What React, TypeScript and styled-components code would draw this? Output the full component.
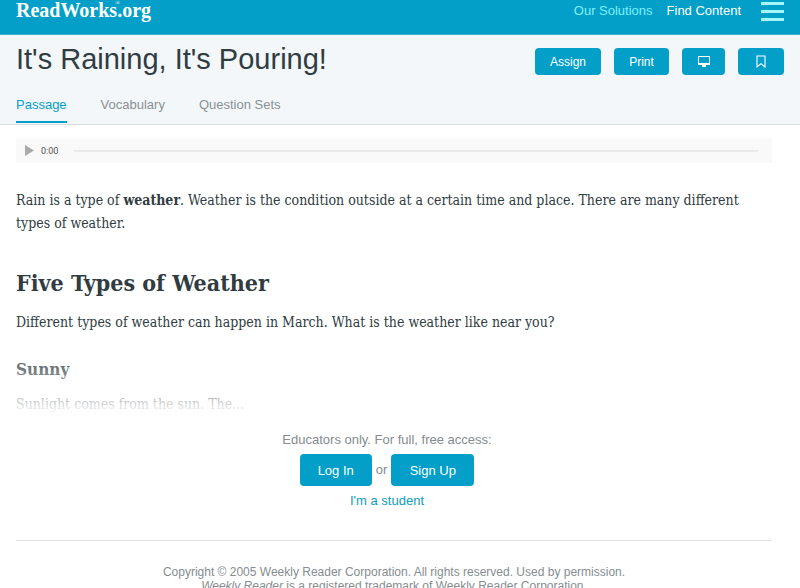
import React from "react";
import styled, { createGlobalStyle } from "styled-components";

const sans = '"Liberation Sans", Arial, sans-serif';
const serif = '"DejaVu Serif Condensed", "DejaVu Serif", serif';
const brand = "#039fc8";

const GlobalStyle = createGlobalStyle`
  *, *::before, *::after { box-sizing: border-box; }
  html { scrollbar-width: none; }
  body { margin: 0; background: #fff; color: #303c42; font-family: ${sans}; }
  h1, h2, h3, p { margin: 0; }
  a { text-decoration: none; }
`;

const TopBar = styled.header`
  display: flex;
  align-items: flex-start;
  justify-content: space-between;
  height: 35px;
  padding: 0 16px;
  background: ${brand};
  border-bottom: 1px solid #3fb0cf;
`;

const Logo = styled.a`
  position: relative;
  color: #fff;
  font-family: "Liberation Serif", serif;
  font-size: 20px;
  line-height: 20px;
  font-weight: 700;
  white-space: nowrap;
`;

const Registered = styled.sup`
  position: absolute;
  top: 0;
  margin-left: -2px;
  font-size: 6px;
  line-height: 6px;
  font-weight: 400;
`;

const TopNav = styled.nav`
  display: flex;
  align-items: center;
  height: 22px;
`;

const NavLink = styled.a<{ $pale?: boolean }>`
  margin-right: 14px;
  font-size: 13px;
  line-height: 22px;
  color: ${(p) => (p.$pale ? "#7ff0fb" : "#fff")};
`;

const MenuButton = styled.button`
  display: flex;
  flex-direction: column;
  justify-content: space-between;
  width: 23px;
  height: 19px;
  margin-left: 6px;
  padding: 0;
  border: 0;
  background: none;
`;

const MenuBar = styled.span`
  height: 3px;
  background: #a4f6fb;
`;

const Heading = styled.section`
  padding: 8px 16px 0;
  background: #f3f7f9;
  border-bottom: 1px solid #d5dddf;
`;

const TitleRow = styled.div`
  display: flex;
  align-items: flex-start;
  justify-content: space-between;
`;

const Title = styled.h1`
  font-size: 29px;
  line-height: 33px;
  font-weight: 400;
`;

const Actions = styled.div`
  display: flex;
  gap: 13px;
  padding-top: 5px;
`;

const ActionButton = styled.button<{ $width: number }>`
  display: flex;
  align-items: center;
  justify-content: center;
  width: ${(p) => p.$width}px;
  height: 27px;
  padding: 0;
  border: 0;
  border-radius: 4px;
  background: ${brand};
  color: #fff;
  font-family: ${sans};
  font-size: 12px;
`;

const Tabs = styled.nav`
  display: flex;
  gap: 34px;
  padding: 17px 0 1px;
`;

const Tab = styled.a<{ $active?: boolean }>`
  padding: 4px 0 9px;
  border-bottom: 2px solid ${(p) => (p.$active ? brand : "transparent")};
  color: ${(p) => (p.$active ? brand : "#899195")};
  font-size: 13px;
  line-height: 15px;
`;

const Main = styled.main`
  padding: 13px 28px 0 16px;
`;

const Player = styled.div`
  display: flex;
  align-items: center;
  height: 25px;
  padding: 0 14px 0 9px;
  background: #f9f9f9;
`;

const PlayButton = styled.button`
  display: flex;
  padding: 0;
  border: 0;
  background: none;
`;

const Time = styled.span`
  width: 33px;
  margin-left: 7px;
  color: #555;
  font-family: Roboto, sans-serif;
  font-size: 9px;
`;

const Seek = styled.input`
  flex: 1;
  min-width: 0;
  height: 12px;
  margin: 0;
  appearance: none;
  background: transparent;

  &::-webkit-slider-runnable-track { height: 2px; background: #e9e9e9; }
  &::-webkit-slider-thumb { appearance: none; width: 1px; height: 2px; background: #e9e9e9; }
`;

const Passage = styled.article`
  position: relative;
  padding-top: 26px;
  font-family: ${serif};

  &::after {
    content: "";
    position: absolute;
    inset: auto 0 0;
    height: 72px;
    background: linear-gradient(rgba(255, 255, 255, 0), rgba(255, 255, 255, 0.7) 78%, #fff 98%);
    pointer-events: none;
  }
`;

const Paragraph = styled.p`
  font-size: 14px;
  line-height: 23px;
`;

const SectionTitle = styled.h2`
  padding: 31px 0 12px;
  font-size: 23px;
  line-height: 33px;
  font-weight: 700;
`;

const SubTitle = styled.h3`
  padding: 24px 0 12px;
  font-size: 17px;
  line-height: 23px;
  font-weight: 700;
`;

const Access = styled.section`
  display: flex;
  flex-direction: column;
  align-items: center;
  padding: 16px 14px 31px 0;
  color: #858c8f;
  font-size: 13px;
  line-height: 16px;
`;

const AccessRow = styled.div`
  display: flex;
  align-items: center;
  gap: 4px;
  margin: 6px 0 7px;
`;

const AccessButton = styled.button<{ $width: number }>`
  width: ${(p) => p.$width}px;
  height: 32px;
  padding: 0;
  border: 0;
  border-radius: 4px;
  background: ${brand};
  color: #fff;
  font-family: ${sans};
  font-size: 13px;
`;

const StudentLink = styled.a`
  color: #0e9dbd;
`;

const Footer = styled.footer`
  padding: 24px 0 16px;
  border-top: 1px solid #dfe3e4;
  color: #858d91;
  font-size: 12px;
  line-height: 14px;
  text-align: center;
`;

const MonitorIcon = () => (
  <svg width="14" height="13" viewBox="0 0 14 13" aria-hidden="true">
    <path d="M1.5 1.5h11v8h-11z" fill="none" stroke="#fff" />
    <path d="M1 8h12v2H1zM5 10h4v2H5z" fill="#fff" />
  </svg>
);

const BookmarkIcon = () => (
  <svg width="10" height="13" viewBox="0 0 10 13" aria-hidden="true">
    <path d="M1 1h8v11L5 8.7 1 12z" fill="none" stroke="#fff" strokeWidth="1.1" />
  </svg>
);

export default function App() {
  return (
    <>
      <GlobalStyle />
      <TopBar>
        <Logo href="#">
          ReadWorks<Registered>®</Registered>.org
        </Logo>
        <TopNav>
          <NavLink href="#" $pale>Our Solutions</NavLink>
          <NavLink href="#">Find Content</NavLink>
          <MenuButton aria-label="Menu">
            <MenuBar />
            <MenuBar />
            <MenuBar />
          </MenuButton>
        </TopNav>
      </TopBar>
      <Heading>
        <TitleRow>
          <Title>It's Raining, It's Pouring!</Title>
          <Actions>
            <ActionButton $width={66}>Assign</ActionButton>
            <ActionButton $width={55}>Print</ActionButton>
            <ActionButton $width={43} aria-label="Present"><MonitorIcon /></ActionButton>
            <ActionButton $width={46} aria-label="Bookmark"><BookmarkIcon /></ActionButton>
          </Actions>
        </TitleRow>
        <Tabs>
          <Tab href="#" $active>Passage</Tab>
          <Tab href="#">Vocabulary</Tab>
          <Tab href="#">Question Sets</Tab>
        </Tabs>
      </Heading>
      <Main>
        <Player>
          <PlayButton aria-label="Play">
            <svg width="9" height="11" viewBox="0 0 9 11" aria-hidden="true">
              <path d="M0 0l9 5.5L0 11z" fill="#aaa" />
            </svg>
          </PlayButton>
          <Time>0:00</Time>
          <Seek type="range" aria-label="Audio position" defaultValue={0} />
        </Player>
        <Passage>
          <Paragraph>
            Rain is a type of <strong>weather</strong>. Weather is the condition outside at a
            certain time and place. There are many different types of weather.
          </Paragraph>
          <SectionTitle>Five Types of Weather</SectionTitle>
          <Paragraph>
            Different types of weather can happen in March. What is the weather like near you?
          </Paragraph>
          <SubTitle>Sunny</SubTitle>
          <Paragraph>Sunlight comes from the sun. The...</Paragraph>
        </Passage>
        <Access>
          <p>Educators only. For full, free access:</p>
          <AccessRow>
            <AccessButton $width={72}>Log In</AccessButton>
            <span>or</span>
            <AccessButton $width={83}>Sign Up</AccessButton>
          </AccessRow>
          <StudentLink href="#">I'm a student</StudentLink>
        </Access>
        <Footer>
          <p>Copyright © 2005 Weekly Reader Corporation. All rights reserved. Used by permission.</p>
          <p><em>Weekly Reader</em> is a registered trademark of Weekly Reader Corporation.</p>
        </Footer>
      </Main>
    </>
  );
}
